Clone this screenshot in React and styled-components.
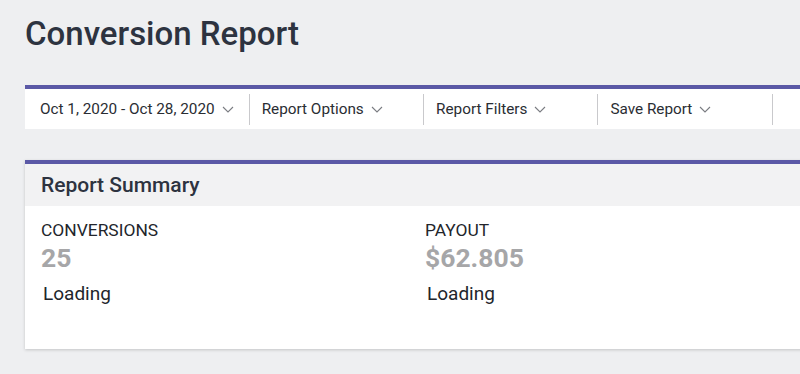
import React from 'react'
import styled, { createGlobalStyle } from "styled-components";

const GlobalStyle = createGlobalStyle`
    html, body {
        margin:0;
        padding:0;
        background:#eeeff1;
        overflow:hidden;
    }
    body {
        font-family: Roboto, "Liberation Sans", Arial, sans-serif;
        color:#2d3340;
    }
`;

const Page = styled.div`
    padding:17px 0 0 25px;
    width:820px;
    height:374px;
    box-sizing:border-box;
`;

const Title = styled.h1`
    margin:0;
    font-size:33px;
    font-weight:500;
    line-height:33px;
    color:#2d3340;
`;

const Toolbar = styled.div`
    display:flex;
    align-items:center;
    margin-top:35px;
    height:40px;
    background:#fff;
    border-top:4px solid #5b59a6;
`;

const ToolItem = styled.div`
    display:flex;
    align-items:center;
    gap:7px;
    box-sizing:border-box;
    min-width:174.4px;
    height:31px;
    padding:0 ${(p) => (p.first ? "15px" : "12px")};
    border-right:1px solid #c9c9cc;
    font-size:15.3px;
    color:#2a2d33;
    cursor:pointer;
    white-space:nowrap;
`;

const Card = styled.div`
    margin-top:31px;
    background:#fff;
    border-top:4px solid #5b59a6;
    box-shadow:0 1px 3px rgba(0,0,0,0.18);
`;

const CardHeader = styled.div`
    background:#f2f2f3;
    height:42px;
    display:flex;
    align-items:center;
    padding-left:16px;
    font-size:21px;
    font-weight:500;
    color:#2d3340;
`;

const CardBody = styled.div`
    display:grid;
    grid-template-columns:384px 384px;
    padding:14px 16px 0;
    height:143px;
    box-sizing:border-box;
`;

const Stat = styled.div`
    display:flex;
    flex-direction:column;
`;

const Label = styled.div`
    font-size:17.4px;
    line-height:20px;
    color:#22252b;
`;

const Value = styled.div`
    margin-top:3px;
    font-size:26.5px;
    line-height:30px;
    font-weight:700;
    color:#a6a6a8;
`;

const Status = styled.div`
    margin-top:10px;
    padding-left:2px;
    font-size:19px;
    line-height:22px;
    color:#22252b;
`;

function Chevron() {
    return (
        <svg width="12" height="7" viewBox="0 0 12 7" fill="none">
            <path d="M1 1l5 5 5-5" stroke="#7a7c82" strokeWidth="1.1" />
        </svg>
    );
}

const options = ["Oct 1, 2020 - Oct 28, 2020", "Report Options", "Report Filters", "Save Report"];

function App() {
    return (
        <>
            <GlobalStyle />
            <Page>
                <Title>Conversion Report</Title>
                <Toolbar>
                    {options.map((o, i) => (
                        <ToolItem key={o} first={i === 0}>
                            {o}
                            <Chevron />
                        </ToolItem>
                    ))}
                </Toolbar>
                <Card>
                    <CardHeader>Report Summary</CardHeader>
                    <CardBody>
                        <Stat>
                            <Label>CONVERSIONS</Label>
                            <Value>25</Value>
                            <Status>Loading</Status>
                        </Stat>
                        <Stat>
                            <Label>PAYOUT</Label>
                            <Value>$62.805</Value>
                            <Status>Loading</Status>
                        </Stat>
                    </CardBody>
                </Card>
            </Page>
        </>
    )
}

export default App;
